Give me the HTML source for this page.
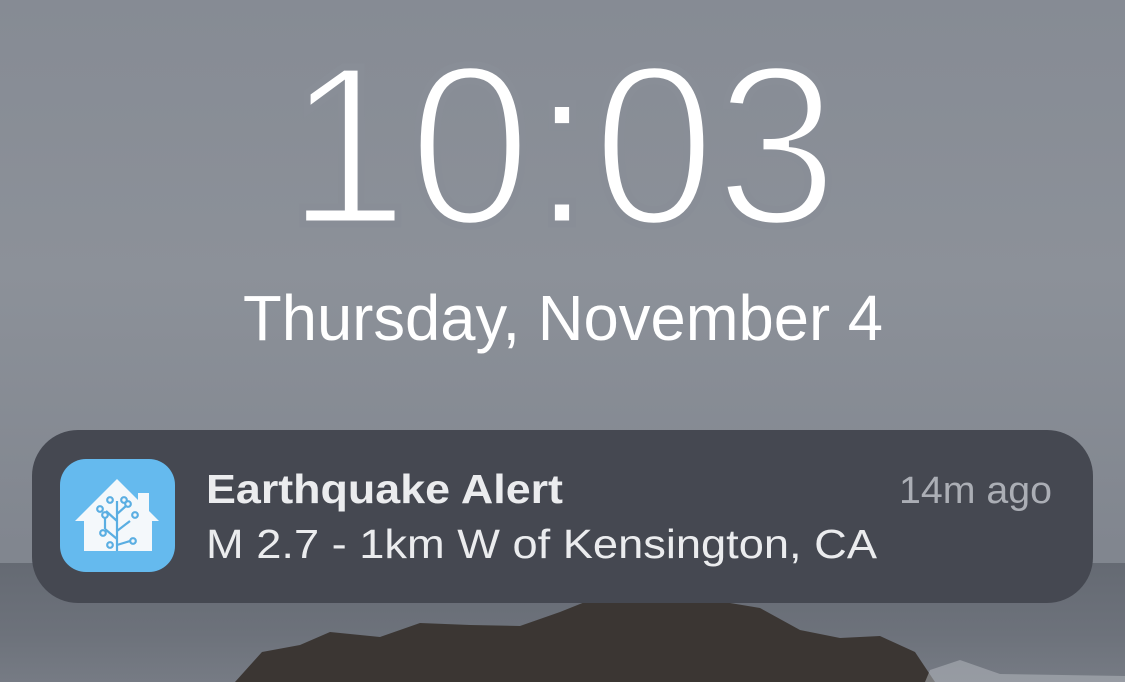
<!DOCTYPE html><html><head><style>
body{margin:0;width:1125px;height:682px;overflow:hidden;position:relative;font-family:"Liberation Sans",sans-serif;background:linear-gradient(#868b94,#8c9199 40%,#81868f 80%)}
.sea{position:absolute;left:0;top:563px;width:1125px;height:119px;background:linear-gradient(#656a73,#6d727b 60%,#767b84)}
.card{position:absolute;left:32px;top:430px;width:1061px;height:173px;border-radius:46px;background:#454851}
.icon{position:absolute;left:60px;top:459px;width:115px;height:113px;border-radius:26px;background:#65baee}
svg.txt{position:absolute;left:0;top:0}
</style></head><body>
<div class="sea"></div>
<svg style="position:absolute;left:0;top:590px" width="1125" height="92"><path d="M235 92 L262 62 L300 55 L330 42 L380 47 L420 33 L470 35 L520 36 L560 22 L590 10 L640 5 L700 8 L760 18 L800 40 L840 48 L880 46 L915 62 L935 92Z" fill="#3b3633"/><path d="M930 80 L960 70 L1000 84 L1125 86 L1125 92 L925 92Z" fill="#b8bcc2" opacity=".5"/></svg>
<svg class="txt" width="1125" height="682">
<text x="286" y="224" font-size="228" textLength="552" lengthAdjust="spacingAndGlyphs" fill="#fff" stroke="#898e97" stroke-width="7" style="paint-order:fill stroke">10:03</text>
<text x="243" y="340" font-size="64" textLength="640" lengthAdjust="spacingAndGlyphs" fill="#fff">Thursday, November 4</text>
</svg>
<div class="card"></div>
<div class="icon"><svg width="115" height="113" viewBox="0 0 115 113"><path d="M15 62 L57 20 L78 41 L78 34 L89 34 L89 52 L99 62 L92 62 L92 92 L24 92 L24 62Z" fill="#f4f8fb"/><g stroke="#5aaee2" stroke-width="2.2" fill="none"><path d="M57 92 V42 M57 80 L45 70 M57 72 L70 62 M57 62 L46 52 M57 86 L70 82 M45 70 V58 M57 55 L66 47"/><circle cx="50" cy="41" r="2.8"/><circle cx="64" cy="41" r="2.8"/><circle cx="40" cy="50" r="2.8"/><circle cx="75" cy="56" r="2.8"/><circle cx="43" cy="74" r="2.8"/><circle cx="73" cy="82" r="2.8"/><circle cx="45" cy="56" r="2.8"/><circle cx="68" cy="45" r="2.8"/><circle cx="50" cy="86" r="2.8"/></g></svg></div>
<svg class="txt" width="1125" height="682">
<text x="206" y="503" font-size="41" font-weight="bold" textLength="357" lengthAdjust="spacingAndGlyphs" fill="#ebecee">Earthquake Alert</text>
<text x="899" y="503" font-size="38" textLength="153" lengthAdjust="spacingAndGlyphs" fill="#abaeb5">14m ago</text>
<text x="206" y="558" font-size="41" textLength="671" lengthAdjust="spacingAndGlyphs" fill="#ebecee">M 2.7 - 1km W of Kensington, CA</text>
</svg>
</body></html>
